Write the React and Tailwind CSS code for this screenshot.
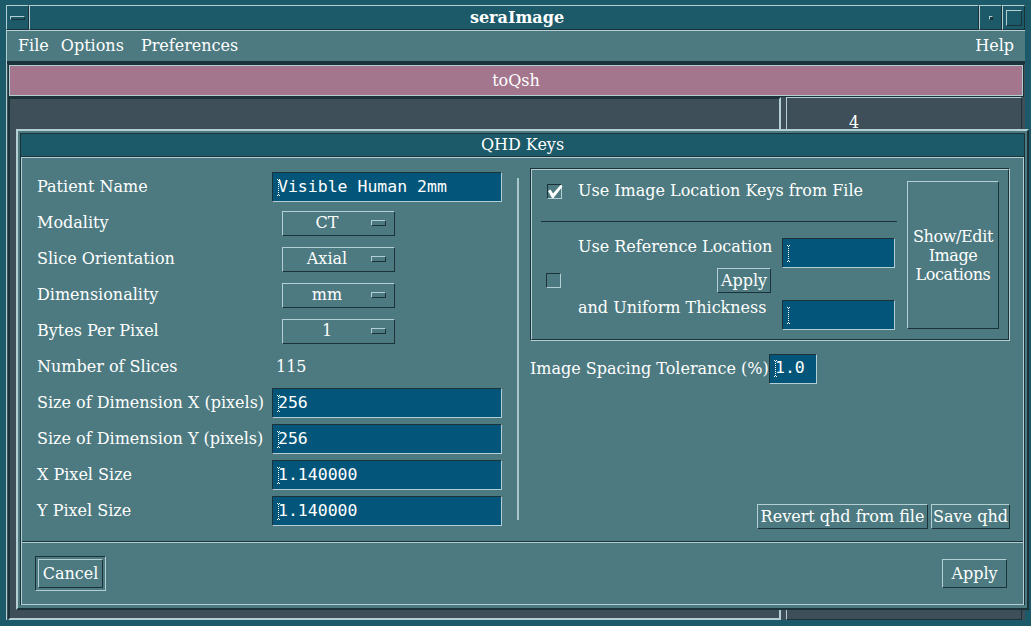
import React from 'react'

const raised =
  'border border-t-[#b3cfd3] border-l-[#b3cfd3] border-b-[#1a3238] border-r-[#1a3238]'
const sunken =
  'border border-t-[#1a3238] border-l-[#1a3238] border-b-[#b3cfd3] border-r-[#b3cfd3]'

const Caret = () => (
  <svg width="3" height="17" viewBox="0 0 3 17" shapeRendering="crispEdges" className="-mr-[2px] shrink-0">
    <rect x="0" y="0" width="1" height="1" fill="#fff" />
    <rect x="2" y="0" width="1" height="1" fill="#fff" />
    <line x1="1.5" y1="1" x2="1.5" y2="16" stroke="#fff" strokeDasharray="1 1" />
    <rect x="0" y="16" width="1" height="1" fill="#fff" />
    <rect x="2" y="16" width="1" height="1" fill="#fff" />
  </svg>
)

const Field = ({ value = '', className = '' }) => (
  <div
    className={`flex h-[30px] shrink-0 items-center bg-[#03567a] pl-[4px] font-['DejaVu_Sans_Mono',monospace] text-[16.5px] text-white ${sunken} ${className}`}
  >
    <Caret />
    <span className="whitespace-pre">{value}</span>
  </div>
)

const OptionMenu = ({ value }) => (
  <div className={`ml-[10px] flex h-[25px] w-[113px] items-center ${raised}`}>
    <span className="flex-1 text-center">{value}</span>
    <span className={`mr-[8px] h-[6px] w-[15px] ${raised}`} />
  </div>
)

const Button = ({ children, className = '' }) => (
  <div className={`flex shrink-0 items-center justify-center whitespace-nowrap ${raised} ${className}`}>
    {children}
  </div>
)

const CheckBox = ({ checked, className = '' }) => (
  <div className={`relative h-[15px] w-[15px] shrink-0 ${sunken} ${className}`}>
    {checked && (
      <svg width="16" height="14" viewBox="0 0 16 14" className="absolute -left-[1px] top-0">
        <polygon points="1,6 3.5,4.5 6,8.5 13.5,0 15.5,1.5 6.5,13 5,13" fill="#fff" />
      </svg>
    )}
  </div>
)

const Row = ({ label, children }) => (
  <div className="flex h-[36px] items-center">
    <span className="w-[235px] shrink-0 whitespace-nowrap">{label}</span>
    {children}
  </div>
)

export default function App() {
  return (
    <div className="relative flex h-[626px] w-[1031px] flex-col overflow-hidden bg-[#1c5a69] px-[6px] pt-[5px] font-['DejaVu_Serif',serif] text-[16px] leading-none text-white">
      {/* window manager title */}
      <div className="flex h-[25px] shrink-0">
        <div className={`flex w-[23px] items-center justify-center ${raised}`}>
          <span className={`h-[4px] w-[15px] ${raised}`} />
        </div>
        <div className={`flex flex-1 items-center justify-center pl-[26px] font-bold ${raised}`}>seraImage</div>
        <div className={`flex w-[23px] items-center justify-center ${raised}`}>
          <span className={`h-[4px] w-[4px] bg-[#15404b] ${raised}`} />
        </div>
        <div className={`flex w-[23px] items-center justify-center ${raised}`}>
          <span className={`h-[16px] w-[16px] ${raised}`} />
        </div>
      </div>

      {/* main window */}
      <div className="mb-[6px] flex flex-1 flex-col border-l border-[#b3cfd3] bg-[#3f4f59]">
        <div className="flex h-[34px] shrink-0 items-center border-t border-b-[3px] border-t-[#b3cfd3] border-b-[#1a3238] bg-[#4c7a80] px-[11px]">
          <span>File</span>
          <span className="ml-[12px]">Options</span>
          <span className="ml-[17px]">Preferences</span>
          <span className="ml-auto">Help</span>
        </div>
        <div className="mx-[1px] shrink-0 border border-[#1a3238]">
          <div className="flex h-[31px] items-center justify-center border border-[#b3cfd3] bg-[#a3768e]">toQsh</div>
        </div>
        <div className="flex flex-1">
          <div className="ml-[1px] flex-1 border-2 border-t-[#1a3238] border-l-[#1a3238] border-b-[#b3cfd3] border-r-[#b3cfd3]" />
          <div className={`ml-[5px] mr-[3px] w-[236px] pl-[62px] pt-[17px] ${raised}`}>4</div>
        </div>
      </div>

      {/* QHD Keys dialog */}
      <div className="absolute left-[16px] top-[129px] flex h-[481px] w-[1013px] flex-col border-2 border-t-[#b3cfd3] border-l-[#b3cfd3] border-b-[#1a3238] border-r-[#1a3238] bg-[#4c7a80] px-[2px] pb-[3px] pt-[2px]">
        <div className="flex flex-1 flex-col border-x border-t border-[#1a3238]">
          <div className="flex h-[23px] shrink-0 items-center justify-center border-b border-[#1a3238] bg-[#1c5a69]">
            QHD Keys
          </div>
          <div className="flex flex-1 flex-col border border-[#b3cfd3]">
            <div className="flex h-[383px] shrink-0 pt-[10px]">
              {/* left column */}
              <div className="ml-[15px] flex w-[465px] flex-col pt-[1px]">
                <Row label="Patient Name">
                  <Field value="Visible Human 2mm" className="w-[230px]" />
                </Row>
                <Row label="Modality">
                  <OptionMenu value="CT" />
                </Row>
                <Row label="Slice Orientation">
                  <OptionMenu value="Axial" />
                </Row>
                <Row label="Dimensionality">
                  <OptionMenu value="mm" />
                </Row>
                <Row label="Bytes Per Pixel">
                  <OptionMenu value="1" />
                </Row>
                <Row label="Number of Slices">
                  <span className="ml-[4px]">115</span>
                </Row>
                <Row label="Size of Dimension X (pixels)">
                  <Field value="256" className="w-[230px]" />
                </Row>
                <Row label="Size of Dimension Y (pixels)">
                  <Field value="256" className="w-[230px]" />
                </Row>
                <Row label="X Pixel Size">
                  <Field value="1.140000" className="w-[230px]" />
                </Row>
                <Row label="Y Pixel Size">
                  <Field value="1.140000" className="w-[230px]" />
                </Row>
              </div>

              <div className="ml-[15px] mt-[10px] h-[342px] w-[2px] self-start bg-[#a9c6ca]" />

              {/* right column */}
              <div className="ml-[11px] flex w-[480px] flex-col pb-[12px]">
                <div className="h-[173px] shrink-0 border border-t-[#1a3238] border-l-[#1a3238] border-b-[#b3cfd3] border-r-[#b3cfd3]">
                  <div className="flex h-full border border-t-[#b3cfd3] border-l-[#b3cfd3] border-b-[#1a3238] border-r-[#1a3238] px-[9px]">
                    <div className="flex flex-1 flex-col">
                      <div className="mt-[11px] flex h-[20px] items-center">
                        <CheckBox checked className="ml-[6px]" />
                        <span className="ml-[16px] whitespace-nowrap">Use Image Location Keys from File</span>
                      </div>
                      <div className="mt-[20px] h-[1px] bg-[#1a3238]" />
                      <div className="mt-[16px] flex items-start">
                        <CheckBox className="ml-[5px] mt-[35px]" />
                        <div className="ml-[17px] flex flex-col">
                          <div className="flex h-[30px] items-start">
                            <span className="w-[204px] shrink-0 whitespace-nowrap pt-[1px]">Use Reference Location</span>
                            <Field className="w-[113px]" />
                          </div>
                          <Button className="ml-[139px] h-[25px] w-[54px]">Apply</Button>
                          <div className="mt-[7px] flex h-[30px] items-start">
                            <span className="w-[204px] shrink-0 whitespace-nowrap">and Uniform Thickness</span>
                            <Field className="w-[113px]" />
                          </div>
                        </div>
                      </div>
                    </div>
                    <Button className="mb-[10px] ml-[10px] mt-[11px] w-[92px] flex-col text-center leading-[19px] tracking-[-0.4px]">
                      <span>Show/Edit</span>
                      <span>Image</span>
                      <span>Locations</span>
                    </Button>
                  </div>
                </div>

                <div className="mt-[13px] flex h-[29px] items-center">
                  <span className="w-[239px] shrink-0 whitespace-nowrap">Image Spacing Tolerance (%)</span>
                  <Field value="1.0" className="h-[29px] w-[48px]" />
                </div>

                <div className="mt-auto flex justify-end gap-[3px]">
                  <Button className="h-[25px] w-[171px]">Revert qhd from file</Button>
                  <Button className="h-[25px] w-[79px]">Save qhd</Button>
                </div>
              </div>
            </div>

            <div className="h-[2px] shrink-0 border-y border-t-[#1a3238] border-b-[#b3cfd3]" />

            <div className="flex flex-1 items-center justify-between pl-[13px] pr-[16px]">
              <div className={`flex h-[35px] w-[71px] items-center justify-center ${sunken}`}>
                <Button className="h-[29px] w-[65px]">Cancel</Button>
              </div>
              <Button className="h-[29px] w-[65px]">Apply</Button>
            </div>
          </div>
        </div>
      </div>
    </div>
  )
}
